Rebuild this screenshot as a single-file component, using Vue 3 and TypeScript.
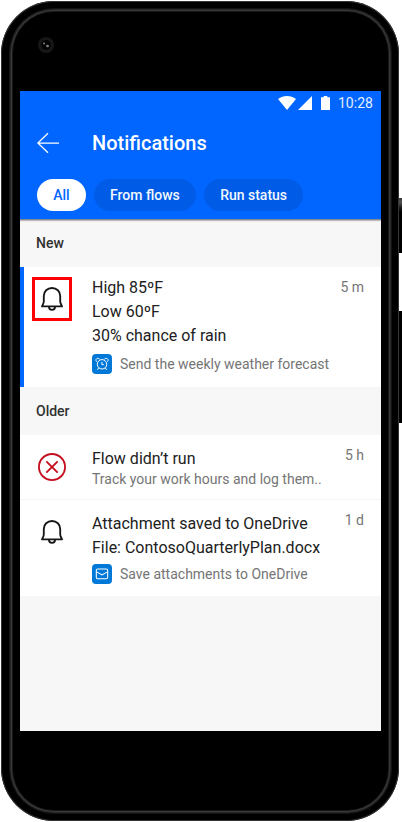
<script setup lang="ts">
type Kind = 'bell' | 'error'
interface Notice {
  kind: Kind
  lines: string[]
  time: string
  flow: string
  badge?: 'clock' | 'mail'
  unread?: boolean
  highlighted?: boolean
}
interface Group {
  title: string
  notices: Notice[]
}

const tabs: string[] = ['All', 'From flows', 'Run status']
const activeTab = 'All'

const groups: Group[] = [
  {
    title: 'New',
    notices: [
      {
        kind: 'bell',
        lines: ['High 85ºF', 'Low 60ºF', '30% chance of rain'],
        time: '5 m',
        flow: 'Send the weekly weather forecast',
        badge: 'clock',
        unread: true,
        highlighted: true,
      },
    ],
  },
  {
    title: 'Older',
    notices: [
      { kind: 'error', lines: ['Flow didn’t run'], time: '5 h', flow: 'Track your work hours and log them..' },
      {
        kind: 'bell',
        lines: ['Attachment saved to OneDrive', 'File: ContosoQuarterlyPlan.docx'],
        time: '1 d',
        flow: 'Save attachments to OneDrive',
        badge: 'mail',
      },
    ],
  },
]
</script>

<template>
  <div class="stage">
    <div class="phone">
      <div class="rim"></div>
      <span class="camera"></span>
      <span class="key power"></span>
      <span class="key volume"></span>

      <main class="screen">
        <header class="header">
          <div class="status">
            <svg class="wifi" width="18" height="14" viewBox="0 0 18 14">
              <path d="M0 3.1C2.6 1 5.700 0 9 0s6.400 1 9 3.100L9 14z" fill="#fff" />
            </svg>
            <svg class="signal" width="14" height="14" viewBox="0 0 14 14">
              <path d="M14 0v14H0z" fill="#fff" />
            </svg>
            <svg class="battery" width="9" height="14" viewBox="0 0 9 14">
              <path d="M2.700 0h3.600v1.200H9V14H0V1.200h2.700z" fill="#fff" />
            </svg>
            <span class="clock">10:28</span>
          </div>
          <div class="titlebar">
            <svg class="back" width="24" height="22" viewBox="0 0 24 22" fill="none" stroke="#fff" stroke-width="1.250">
              <path d="M12 1.300 1.900 11 12 20.700M1.900 11H23" />
            </svg>
            <h1>Notifications</h1>
          </div>
          <nav class="tabs">
            <button v-for="tab in tabs" :key="tab" class="tab" :class="{ active: tab === activeTab }">{{ tab }}</button>
          </nav>
        </header>

        <section v-for="group in groups" :key="group.title" class="group">
          <h2>{{ group.title }}</h2>
          <article
            v-for="notice in group.notices"
            :key="notice.flow"
            class="notice"
            :class="[notice.kind, { unread: notice.unread }]"
          >
            <div class="symbol" :class="{ highlighted: notice.highlighted }">
              <svg v-if="notice.kind === 'bell'" width="24" height="26" viewBox="0 0 24 26" fill="none" stroke="#161616" stroke-width="1.850" stroke-linejoin="round">
                <path d="M12 2c-4.700 0-8.200 3.400-8.200 7.900v5.400c0 .8-.2 1.500-.5 2.200L2 20.400h20l-1.300-2.900c-.3-.7-.5-1.400-.5-2.200V9.900C20.200 5.400 16.700 2 12 2z" />
                <path d="M8.900 20.600c0 2 1.300 3.300 3.100 3.300s3.100-1.300 3.100-3.300" />
              </svg>
              <svg v-else width="28" height="28" viewBox="0 0 28 28" fill="none" stroke="#c50f1f" stroke-width="1.850">
                <circle cx="14" cy="14" r="13.050" />
                <path d="m8.300 8.300 11.400 11.400M19.700 8.300 8.300 19.700" />
              </svg>
            </div>
            <div class="body">
              <p v-for="line in notice.lines" :key="line" class="line">{{ line }}</p>
              <div class="source">
                <span v-if="notice.badge" class="badge">
                  <svg v-if="notice.badge === 'clock'" width="14" height="14" viewBox="0 0 14 14" fill="none" stroke="#fff" stroke-width="1">
                    <circle cx="7" cy="7.300" r="4.700" />
                    <path d="M6.900 4.900v2.700h1.900M3.700 10.900 2.400 12.800M10.300 10.900l1.300 1.900" />
                    <path d="M1.500 4.700C.6 3.500.8 2.300 1.700 1.700c.9-.6 2.200-.4 3 .5M12.500 4.700c.9-1.200.7-2.400-.2-3-.9-.6-2.200-.4-3 .5" />
                  </svg>
                  <svg v-else width="14" height="14" viewBox="0 0 14 14" fill="none" stroke="#fff" stroke-width="1.050">
                    <rect x="1.300" y="2" width="11.400" height="9.700" rx="1.500" />
                    <path d="M1.500 4.900 7 7.900l5.500-3" />
                  </svg>
                </span>
                <span>{{ notice.flow }}</span>
              </div>
            </div>
            <time>{{ notice.time }}</time>
          </article>
        </section>
      </main>
    </div>
  </div>
</template>

<style>
body {
  background: #fff;
}
</style>

<style scoped>
* {
  box-sizing: border-box;
}
.stage {
  width: 402px;
  height: 822px;
  padding: 1px 3px 1px 1px;
  overflow: hidden;
  background: #fff;
  font-family: Roboto, "Liberation Sans", sans-serif;
}
.phone {
  position: relative;
  width: 398px;
  height: 820px;
  padding: 90px 18px 90px 19px;
  border-radius: 53px;
  background: #000;
  box-shadow: inset 0 0 0 1px #363636;
}
.rim {
  position: absolute;
  inset: 7px 7px 7px 8px;
  border: 1px solid #141414;
  border-radius: 45px;
  box-shadow: inset 0 0 0 1px #262626, inset 0 0 0 2px #3a3a3a, inset 0 0 0 3px #161616;
}
.camera {
  position: absolute;
  left: 37px;
  top: 36px;
  width: 16px;
  height: 16px;
  border: 3px solid #171717;
  border-radius: 50%;
  background: radial-gradient(circle at 3px 3.500px, #777 0 0.700px, transparent 1.300px), radial-gradient(circle at 6.500px 6px, #777 0 1px, transparent 1.700px), #030303;
}
.key {
  position: absolute;
  left: 398px;
  width: 3px;
  background: #000;
}
.power {
  top: 197px;
  height: 55px;
  background: linear-gradient(#333, #555 4px, #171717 10px, #000 14px);
}
.volume {
  top: 310px;
  height: 112px;
}
.screen {
  position: relative;
  width: 361px;
  height: 640px;
  background: #f7f7f7;
}
.header {
  height: 129px;
  background: #0066ff;
  border-bottom: 1px solid #7f8a92;
  box-shadow: 0 1px 1px rgba(0, 0, 0, 0.24);
  color: #fff;
}
.status {
  display: flex;
  align-items: center;
  height: 24px;
  padding: 0 8px 0 258px;
}
.signal {
  margin-left: 2px;
}
.battery {
  margin-left: 9px;
}
.clock {
  margin-left: 8px;
  font-size: 14px;
  line-height: 24px;
  color: #e3eeff;
  white-space: nowrap;
}
.titlebar {
  display: flex;
  align-items: center;
  height: 56px;
  padding-left: 16px;
}
.back {
  margin-right: 32px;
}
h1 {
  margin: 0;
  font-size: 20px;
  font-weight: 500;
  line-height: 24px;
}
.tabs {
  display: flex;
  gap: 8px;
  padding: 8px 17px;
}
.tab {
  height: 32px;
  padding: 0 16.200px;
  border: 0;
  border-radius: 16px;
  background: #005ce6;
  color: #f2f7ff;
  font: 500 14px/32px Roboto, "Liberation Sans", sans-serif;
  white-space: nowrap;
}
.tab.active {
  background: #fff;
  color: #0066ff;
}
h2 {
  height: 48px;
  margin: 0;
  padding-left: 16px;
  font-size: 14px;
  font-weight: 500;
  line-height: 48px;
  color: #303030;
}
.group:first-of-type h2 {
  height: 47px;
  line-height: 46px;
}
.notice {
  display: flex;
  align-items: flex-start;
  padding: 8px 17px 0 12px;
  background: #fff;
}
.notice + .notice {
  border-top: 1px solid #f4f4f4;
}
.notice.unread {
  padding-left: 8px;
  border-left: 4px solid #0066ff;
}
.symbol {
  display: flex;
  flex: none;
  align-items: center;
  justify-content: center;
  width: 40px;
  height: 44px;
  margin: 2px 20px 0 0;
}
.symbol.highlighted {
  border: 3px solid #f00;
}
.error .symbol {
  height: 48px;
  margin-top: 0;
}
.body {
  flex: 1;
  padding: 4px 0 12px;
}
.line {
  margin: 0;
  font-size: 16px;
  line-height: 24px;
  color: #212121;
  white-space: nowrap;
}
.source {
  display: flex;
  align-items: center;
  height: 20px;
  margin-top: 4px;
  font-size: 14px;
  line-height: 20px;
  color: #757575;
  white-space: nowrap;
}
.unread .body {
  padding: 1px 0 13px;
}
.unread .source {
  margin-top: 6px;
}
.error .body {
  padding: 4px 0 12px;
}
.error .source {
  height: 16px;
  margin-top: 0;
}
.badge {
  display: flex;
  align-items: center;
  justify-content: center;
  width: 20px;
  height: 20px;
  margin-right: 8px;
  border-radius: 4px;
  background: #0078d7;
}
time {
  font-size: 14px;
  line-height: 24px;
  color: #757575;
  white-space: nowrap;
}
</style>
